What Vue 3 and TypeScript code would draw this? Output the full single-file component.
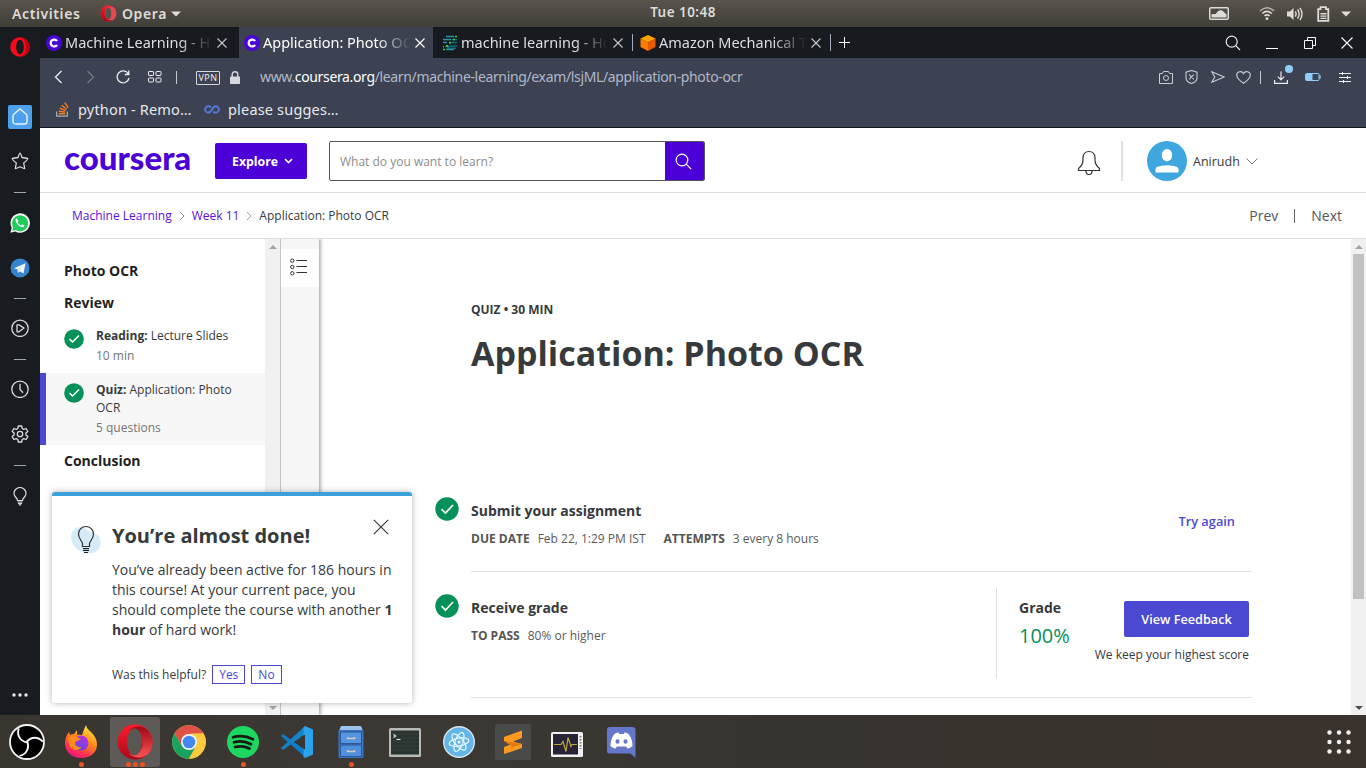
<script setup lang="ts">
interface Tab { title: string; icon: 'coursera' | 'hacker' | 'aws'; active?: boolean }
const tabs: Tab[] = [
  { title: 'Machine Learning - Home', icon: 'coursera' },
  { title: 'Application: Photo OCR', icon: 'coursera', active: true },
  { title: 'machine learning - How to', icon: 'hacker' },
  { title: 'Amazon Mechanical Turk', icon: 'aws' },
]

interface Item { kind: string; name: string; info: string; current?: boolean }
const items: Item[] = [
  { kind: 'Reading:', name: 'Lecture Slides', info: '10 min' },
  { kind: 'Quiz:', name: 'Application: Photo OCR', info: '5 questions', current: true },
]
</script>

<template>
  <div class="desktop">
    <header class="topbar">
      <span class="activities">Activities</span>
      <svg class="tb-opera" width="17" height="17" viewBox="0 0 17 17"><defs><linearGradient id="opg" x1="0" y1="0" x2="0" y2="1"><stop offset="0" stop-color="#ff1b2d" /><stop offset="1" stop-color="#a70014" /></linearGradient></defs><ellipse cx="8.500" cy="8.500" rx="8" ry="8" fill="#e8474f" /><path d="M8.500.500a8 8 0 0 0 0 16c2 0 3-.8 4-1.800-5 2-7.800-1.700-7.800-6.200s2.800-8.200 7.800-6.200C11.500 1.300 10.500.500 8.500.500z" fill="url(#opg)" /><ellipse cx="8.300" cy="8.500" rx="3" ry="6" fill="#55504a" /></svg>
      <span class="tb-app">Opera</span>
      <svg class="tb-caret" width="10" height="6" viewBox="0 0 10 6"><path d="M0 .5h10L5 5.500z" fill="#dedcd8" /></svg>
      <span class="clock">Tue 10:48</span>
      <div class="tray">
        <div class="c28 traygap"><svg width="20" height="13" viewBox="0 0 20 13"><rect x=".75" y=".75" width="18.500" height="11.500" rx="1" fill="none" stroke="#dedcd8" stroke-width="1.500" /><path d="M2.500 10.500V7.500c2.500-1 3.500.5 5-1.500s3-3.500 5.500-2.500 2.500 3 4.500 3.500v3.500z" fill="#dedcd8" /></svg></div>
        <div class="c28"><svg width="16" height="15" viewBox="0 0 16 15" fill="none" stroke="#dedcd8" stroke-width="1.600"><path d="M1 5Q8-1.500 15 5" stroke="#b5b2ac" /><path d="M3.300 7.500q4.700-4.300 9.400 0M5.500 9.900q2.500-2.200 5 0" /><circle cx="8" cy="12.700" r="1.400" fill="#dedcd8" stroke="none" /></svg></div>
        <div class="c27"><svg width="16" height="14" viewBox="0 0 16 14"><path d="M0 4.500h3L6.500 1v12L3 9.500H0z" fill="#dedcd8" /><path d="M8.200 4.500q1.800 2.500 0 5M10.500 2.500q3.400 4.500 0 9M12.900.8q4.200 6.200 0 12.400" fill="none" stroke="#dedcd8" stroke-width="1.400" /></svg></div>
        <div class="c30"><svg width="13" height="16" viewBox="0 0 13 16"><path d="M1.200 3.200h2.300v-2h5.500v2h2.300v11.600H1.200z" fill="none" stroke="#dedcd8" stroke-width="1.800" /><path d="M3.500 7.800h6M3.500 10.100h6M3.500 12.400h6" stroke="#dedcd8" stroke-width="1.400" /></svg></div>
        <div class="c16"><svg width="10" height="6" viewBox="0 0 10 6"><path d="M0 .5h10L5 5.500z" fill="#dedcd8" /></svg></div>
      </div>
    </header>

    <div class="window">
      <nav class="rail">
        <div class="s40 first"><svg width="20" height="20" viewBox="0 0 20 20"><path fill-rule="evenodd" fill="#f80b16" d="M10 .2a9.800 9.800 0 1 0 0 19.600 9.800 9.800 0 0 0 0-19.600zm0 2.600c2.300 0 3.800 3.200 3.800 7.200s-1.500 7.200-3.800 7.200-3.800-3.200-3.800-7.200S7.700 2.800 10 2.800z" /><path d="M10 .2c2 0 9.800 2 9.800 9.800S12 19.800 10 19.800c4-1 6-5 6-9.800S14 1.200 10 .2z" fill="#c00010" /></svg></div>
        <div class="s44"><span class="home"><svg width="16" height="18" viewBox="0 0 16 18"><path d="M1 8Q1 7 1.800 6.200L8 1l6.200 5.200Q15 7 15 8v5.500q0 2.500-2.500 2.500h-9Q1 16 1 13.500z" fill="none" stroke="#e8f2fc" stroke-width="1.400" /></svg></span></div>
        <div class="s44"><svg width="18" height="18" viewBox="0 0 18 18"><path d="M9 1.200q.6 0 2 4.300l5.700 1q.6.800-4 4.500l1 5.500Q13 17 9 14.800 5 17 4.300 16.500l1-5.500Q.7 7.300 1.300 6.500l5.700-1Q8.400 1.200 9 1.200z" fill="none" stroke="#d8dadd" stroke-width="1.300" stroke-linejoin="round" /></svg></div>
        <div class="s18"><i></i></div>
        <div class="s44"><svg width="20" height="20" viewBox="0 0 20 20"><path d="M.3 19.700l1.400-5A9.700 9.700 0 1 1 5.300 18.400z" fill="#f4f6f5" /><path d="M2.200 17.800l1-3.400A8 8 0 1 1 5.700 17z" fill="#1fcb5b" /><path d="M6.800 5.200c-1.300.5-1.600 2.100-.8 3.800 1.400 2.900 3.600 4.800 6 5.200 1.200.2 2.300-.6 2.400-1.600l-2.200-1.300-1.200 1.100c-1.500-.5-2.800-1.800-3.400-3.200l.9-1z" fill="#fff" /></svg></div>
        <div class="s46"><svg width="20" height="20" viewBox="0 0 20 20"><circle cx="10" cy="10" r="9.500" fill="#3584cd" /><path d="M4 10.300l11.500-5-2 10.200-3.700-2.300-1.800 1.800-.5-3.500z" fill="#f4f7fa" /><path d="M7.500 11.500L13 7.500l-4.500 5z" fill="#b9cfe3" /></svg></div>
        <div class="s14"><i></i></div>
        <div class="s46"><svg width="19" height="18" viewBox="0 0 19 18" fill="none" stroke="#d8dadd" stroke-width="1.300"><circle cx="9" cy="9.300" r="8.200" /><path d="M6 5.800h2l5 3.300-5 3.700H6z" stroke-linejoin="round" /></svg></div>
        <div class="s16"><i></i></div>
        <div class="s44"><svg width="19" height="18" viewBox="0 0 19 18" fill="none" stroke="#d8dadd" stroke-width="1.300"><circle cx="9" cy="9.300" r="8.200" /><path d="M9 3.800v5.700l3 3.300" /></svg></div>
        <div class="s46"><svg width="19" height="18" viewBox="0 0 19 18" fill="none" stroke="#d8dadd" stroke-width="1.300" stroke-linejoin="round"><path d="M7.300 1h3.400l.5 2.500 1.500.9 2.400-.9 1.700 3-1.900 1.600v1.800l1.900 1.600-1.700 3-2.400-.9-1.500.9-.5 2.500H7.300l-.5-2.500-1.500-.9-2.400.9-1.700-3 1.900-1.600V8.100L1.200 6.500l1.700-3 2.400.9 1.500-.9z" /><circle cx="9" cy="9" r="2.700" /></svg></div>
        <div class="s16"><i></i></div>
        <div class="s46"><svg width="14" height="19" viewBox="0 0 14 19"><path d="M4.500 13.500C4.500 11 1 9.800 1 6.500a6 6 0 0 1 12 0c0 3.300-3.500 4.500-3.500 7z" fill="none" stroke="#d8dadd" stroke-width="1.200" /><path d="M4.500 15h5M5 16.600h4M6 18h2" stroke="#d8dadd" stroke-width="1.200" /></svg></div>
        <div class="s40 last"><svg width="16" height="4" viewBox="0 0 16 4" fill="#e4e6e8"><circle cx="2" cy="2" r="1.700" /><circle cx="8" cy="2" r="1.700" /><circle cx="14" cy="2" r="1.700" /></svg></div>
      </nav>

      <section class="browser">
        <div class="tabs">
          <div v-for="(t, i) in tabs" :key="i" class="tab" :class="{ active: t.active, ruled: i > 1 }">
            <svg v-if="t.icon === 'coursera'" width="16" height="16" viewBox="0 0 16 16"><circle cx="8" cy="8" r="8" fill="#4a06d6" /><path d="M11 6.200a3.400 3.400 0 1 0 0 3.600" fill="none" stroke="#fff" stroke-width="2.300" /></svg>
            <svg v-else-if="t.icon === 'hacker'" width="16" height="16" viewBox="0 0 16 16" stroke-width="1.600"><path d="M4 1.500h8M1 4.500h8M1 7.500h4M4 14.500h8M3.500 11.500h4" stroke="#2c93a6" /><path d="M7 7.500h8M8 11h7M5 13.200h9M10 4.500h5" stroke="#0d6f88" /><path d="M13 1.500h2M11 4.500h2M7 7.700h2M4 10.700h2M1 14.500h2M1 11.700h1" stroke="#3fd42c" /></svg>
            <svg v-else width="16" height="16" viewBox="0 0 16 16"><path d="M8 0l7.500 3.500L8 7.500.5 3.500z" fill="#ffa300" /><path d="M.5 3.500L8 7.500V16L.5 12z" fill="#ff7a00" /><path d="M15.500 3.500L8 7.500V16l7.500-4z" fill="#e85a00" /></svg>
            <span class="tab-title">{{ t.title }}</span>
            <svg class="x" width="10" height="10" viewBox="0 0 10 10"><path d="M.5.5l9 9M9.500.5l-9 9" stroke="currentColor" stroke-width="1.100" /></svg>
          </div>
          <svg class="plus" width="11" height="11" viewBox="0 0 11 11"><path d="M5.500 0v11M0 5.500h11" stroke="#fff" /></svg>
          <div class="winctl">
            <div class="c38"><svg width="16" height="16" viewBox="0 0 16 16" fill="none" stroke="#e8eaec" stroke-width="1.200"><circle cx="6.700" cy="6.700" r="5.500" /><path d="M10.700 10.700l4.300 4.300" /></svg></div>
            <div class="c39"><svg width="12" height="12" viewBox="0 0 12 12"><path d="M0 11.500h12" stroke="#fff" /></svg></div>
            <div class="c38"><svg width="12" height="12" viewBox="0 0 12 12" fill="none" stroke="#fff"><path d="M.5 3.500h8v8h-8zM3.500 3.500v-3h8v8h-3" /></svg></div>
            <div class="c37"><svg width="12" height="12" viewBox="0 0 12 12"><path d="M.5.500l11 11M11.500.500l-11 11" stroke="#fff" stroke-width="1.100" /></svg></div>
          </div>
        </div>

        <div class="toolbar">
          <div class="c32"><svg width="9" height="14" viewBox="0 0 9 14"><path d="M7.500 1L1.500 7l6 6" fill="none" stroke="#eceef1" stroke-width="1.300" /></svg></div>
          <div class="c32"><svg width="9" height="14" viewBox="0 0 9 14"><path d="M1.500 1l6 6-6 6" fill="none" stroke="#737986" stroke-width="1.300" /></svg></div>
          <div class="c34"><svg width="14" height="14" viewBox="0 0 14 14"><path d="M12.300 3.800A6 6 0 1 0 13 8M12.800.5v4h-4" fill="none" stroke="#eceef1" stroke-width="1.300" /></svg></div>
          <div class="c29"><svg width="14" height="12" viewBox="0 0 14 12" fill="none" stroke="#eceef1"><rect x=".5" y=".5" width="5" height="4" rx=".6" /><rect x="8" y=".5" width="5" height="4" rx=".6" /><rect x=".5" y="7" width="5" height="4" rx=".6" /><rect x="8" y="7" width="5" height="4" rx=".6" /></svg></div>
          <div class="c15"><b class="vsep"></b></div>
          <span class="vpn">VPN</span>
          <svg class="lock" width="10" height="14" viewBox="0 0 10 14"><path d="M2.200 6V3.500a2.800 2.800 0 0 1 5.600 0V6" fill="none" stroke="#d6d8dc" stroke-width="1.400" /><rect y="5.500" width="10" height="7.500" rx=".7" fill="#d6d8dc" /></svg>
          <span class="url">www.<em>coursera.org</em>/learn/machine-learning/exam/lsjML/application-photo-ocr</span>
          <div class="actions">
            <div class="c26"><svg width="14" height="13" viewBox="0 0 14 13" fill="none" stroke="#c9ccd3"><path d="M.5 2.500h3l1-2h5l1 2h3v10H.5z" /><circle cx="7" cy="7" r="2.500" /></svg></div>
            <div class="c26"><svg width="14" height="14" viewBox="0 0 14 14" fill="none" stroke="#c9ccd3"><path d="M6.500.5l5.500 1.600v6Q12 12 6.500 13.500 1 12 1 8.100v-6zM4.200 4.700l4.600 4.600M8.800 4.700L4.200 9.300" stroke-width="1.100" /></svg></div>
            <div class="c26"><svg width="14" height="12" viewBox="0 0 14 12" fill="none" stroke="#c9ccd3"><path d="M.8.800L13.200 6 .8 11.200 3.800 6z" stroke-width="1.100" /></svg></div>
            <div class="c26"><svg width="16" height="13" viewBox="0 0 16 13" fill="none" stroke="#c9ccd3"><path d="M7.500 12.300Q.7 7.500.7 4.200C.7.500 5.800-.7 7.500 2.600 9.200-.7 14.300.5 14.300 4.200q0 3.300-6.800 8.100z" stroke-width="1.100" /></svg></div>
            <div class="c7"><b class="vsep"></b></div>
            <div class="c34 dl"><svg width="14" height="13" viewBox="0 0 14 13" fill="none" stroke="#e8eaee" stroke-width="1.200"><path d="M.6 9v3.400h12.800V9M7 .5v8.300M3.800 5.600L7 8.800l3.200-3.200" /></svg><u></u></div>
            <div class="c30"><svg width="16" height="8" viewBox="0 0 16 8"><rect x=".5" y=".5" width="13.500" height="7" rx="1" fill="none" stroke="#8fcdfb" /><rect x="1" y="1" width="6.500" height="6" fill="#8fcdfb" /><path d="M15 2.500v3" stroke="#8fcdfb" stroke-width="1.500" /></svg></div>
            <div class="c34"><svg width="12" height="11" viewBox="0 0 12 11" stroke="#eceef1"><path d="M0 1.500h12M0 5.500h12M0 9.500h12M3.500 0v3M8.500 4v3M4.500 8v3" /></svg></div>
          </div>
        </div>

        <div class="bookmarks">
          <svg width="13" height="15" viewBox="0 0 13 15" fill="none"><path d="M.7 9.500v4.700h10.600V9.500" stroke="#a9adb4" stroke-width="1.200" /><path d="M2.800 11.800h6.400M2.900 9.200l6.300.9M3.800 6.200l5.900 2.500M5.800 3.300l4.900 4M8.700.7l3.500 5" stroke="#f48024" stroke-width="1.400" /></svg>
          <span class="bm1">python - Remo…</span>
          <svg class="inf" width="16" height="9" viewBox="0 0 16 9"><path d="M7 2Q5.500 1.200 4.300 1.200a3.200 3.200 0 0 0 0 6.400C8 7.600 8 1.200 11.700 1.200a3.200 3.200 0 0 1 0 6.400Q10.500 7.600 9 6.800" fill="none" stroke="#5579d8" stroke-width="2" /></svg>
          <span class="bm2">please sugges…</span>
        </div>

        <main class="page">
          <div class="site-head">
            <span class="logo">coursera</span>
            <button class="explore">Explore<svg width="9" height="6" viewBox="0 0 9 6"><path d="M1 1l3.500 3.500L8 1" fill="none" stroke="#fff" stroke-width="1.600" /></svg></button>
            <div class="search"><span>What do you want to learn?</span><div class="go"><svg width="17" height="17" viewBox="0 0 17 17" fill="none" stroke="#fff" stroke-width="1.200"><circle cx="7" cy="7" r="5.800" /><path d="M11.200 11.200l5 5" /></svg></div></div>
            <svg class="bell" width="24" height="26" viewBox="0 0 24 26" fill="none" stroke="#333"><path d="M1.500 20.500v-2Q6 15 6 10V7.500Q6.500 1.500 12 1.500t6 6V10q0 5 4.500 8.500v2z" stroke-width="1.200" /><path d="M8.800 20.800q.2 3.700 3.200 3.700t3.200-3.700" stroke-width="1.200" /></svg>
            <b class="head-rule"></b>
            <svg class="avatar" width="40" height="40" viewBox="0 0 40 40"><circle cx="20" cy="20" r="20" fill="#3fa7df" /><ellipse cx="20" cy="14.200" rx="5.200" ry="6.200" fill="#fff" /><path d="M8.500 31.500v-3.200q0-1.800 2-2.500 4-1.600 9.500-1.600t9.500 1.600q2 .7 2 2.500v3.200z" fill="#fff" /></svg>
            <span class="user">Anirudh</span>
            <svg class="down" width="12" height="7" viewBox="0 0 12 7"><path d="M.7.700L6 6 11.300.7" fill="none" stroke="#777" /></svg>
          </div>

          <div class="crumbs">
            <a>Machine Learning</a>
            <svg width="6" height="10" viewBox="0 0 6 10"><path d="M.8.800L5 5 .8 9.200" fill="none" stroke="#999" /></svg>
            <a>Week 11</a>
            <svg width="6" height="10" viewBox="0 0 6 10"><path d="M.8.800L5 5 .8 9.200" fill="none" stroke="#999" /></svg>
            <span>Application: Photo OCR</span>
            <div class="pager"><span>Prev</span><b></b><span>Next</span></div>
          </div>

          <div class="body">
            <aside class="lessons">
              <h4>Photo OCR</h4>
              <h4>Review</h4>
              <div v-for="it in items" :key="it.kind" class="item" :class="{ current: it.current }">
                <svg width="20" height="20" viewBox="0 0 20 20"><circle cx="10" cy="10" r="9.800" fill="#06905a" /><path d="M5.500 10l3 3L15 6.500" fill="none" stroke="#fff" stroke-width="1.500" /></svg>
                <div><p><strong>{{ it.kind }}</strong> {{ it.name }}</p><small>{{ it.info }}</small></div>
              </div>
              <h4>Conclusion</h4>
            </aside>
            <div class="scroll left"><svg width="8" height="4" viewBox="0 0 8 4"><path d="M0 4l4-4 4 4z" fill="#a3a3a3" /></svg><svg width="8" height="4" viewBox="0 0 8 4"><path d="M0 0h8L4 4z" fill="#a3a3a3" /></svg></div>
            <div class="toggle"><div><svg width="18" height="18" viewBox="0 0 18 18" fill="none" stroke="#333"><circle cx="2.300" cy="2.700" r="1.700" /><circle cx="2.300" cy="9" r="1.700" /><circle cx="2.300" cy="15.300" r="1.700" /><path d="M6.500 2.500H17M6.500 8.500H17M6.500 14.500H17" /></svg></div></div>

            <article class="content">
              <p class="eyebrow">QUIZ • 30 MIN</p>
              <h1>Application: Photo OCR</h1>
              <section class="row submit">
                <svg class="tick" width="24" height="24" viewBox="0 0 24 24"><circle cx="12" cy="12" r="11.700" fill="#06905a" /><path d="M6.500 12.200l4 3.800 7.500-8" fill="none" stroke="#fff" stroke-width="1.700" /></svg>
                <div class="desc"><h3>Submit your assignment</h3><p><strong>DUE DATE</strong>Feb 22, 1:29 PM IST<strong class="next">ATTEMPTS</strong>3 every 8 hours</p></div>
                <a class="again">Try again</a>
              </section>
              <section class="row receive">
                <svg class="tick" width="24" height="24" viewBox="0 0 24 24"><circle cx="12" cy="12" r="11.700" fill="#06905a" /><path d="M6.500 12.200l4 3.800 7.500-8" fill="none" stroke="#fff" stroke-width="1.700" /></svg>
                <div class="desc"><h3>Receive grade</h3><p><strong>TO PASS</strong>80% or higher</p></div>
                <div class="grade">
                  <div><h3>Grade</h3><span class="pct">100%</span></div>
                  <div class="fb"><button>View Feedback</button><span>We keep your highest score</span></div>
                </div>
              </section>
            </article>
            <div class="scroll right"><svg width="8" height="4" viewBox="0 0 8 4"><path d="M0 4l4-4 4 4z" fill="#a3a3a3" /></svg><b></b><svg width="8" height="4" viewBox="0 0 8 4"><path d="M0 0h8L4 4z" fill="#505050" /></svg></div>
          </div>
        </main>
      </section>
    </div>

    <div class="toast">
      <svg class="idea" width="32" height="30" viewBox="0 0 32 30"><path d="M1 12C1 5 6 2 11 2s7 5 12 6 7 3 7.500 9-4 11.500-12 11.500S1 21 1 12z" fill="#d5ebf8" /><path d="M12.500 21.500v-3C12 16 8.500 13.500 8.500 9a7.500 7.500 0 0 1 15 0c0 4.500-3.500 7-4 9.500v3z" fill="none" stroke="#333" stroke-width="1.200" /><path d="M13 23.500h6M13 25.300h6M14 27.500h4" stroke="#222" stroke-width="1.200" /></svg>
      <div class="msg">
        <h2>You’re almost done!</h2>
        <p>You’ve already been active for 186 hours in this course! At your current pace, you should complete the course with another <strong>1 hour</strong> of hard work!</p>
        <div class="helpful">Was this helpful?<span>Yes</span><span>No</span></div>
      </div>
      <svg class="close" width="16" height="16" viewBox="0 0 16 16"><path d="M.8.800l14.400 14.400M15.200.8L.8 15.200" stroke="#333" stroke-width="1.100" /></svg>
    </div>

    <footer class="dock">
      <div class="app"><svg width="36" height="36" viewBox="0 0 36 36"><circle cx="18" cy="18" r="17" fill="#000" stroke="#f4f4f4" stroke-width="1.800" /><g fill="none" stroke="#f4f4f4" stroke-width="1.900"><path d="M9.800 4.500C7.500 11 11 17 18 18.500" /><path d="M9.800 4.500C7.500 11 11 17 18 18.500" transform="rotate(120 18 18)" /><path d="M9.800 4.500C7.500 11 11 17 18 18.500" transform="rotate(240 18 18)" /></g></svg></div>
      <div class="app run"><svg width="34" height="34" viewBox="0 0 34 34"><defs><linearGradient id="ff" x1=".8" y1="0" x2=".3" y2="1"><stop offset="0" stop-color="#fff044" /><stop offset=".45" stop-color="#ff8a16" /><stop offset=".8" stop-color="#ff2f52" /><stop offset="1" stop-color="#e31587" /></linearGradient><linearGradient id="ffp" x1=".6" y1="0" x2=".3" y2="1"><stop offset="0" stop-color="#b833e1" /><stop offset="1" stop-color="#5b4be0" /></linearGradient></defs><path d="M22 0c1 4 3 5 5 7 4 4 6 8 6 12.500C33 28 26 33 17 33S1 27 1 18c0-4 1.500-8 4-11l1 3q2-1 4-1l3-4v4.500l5 .5q2-6 4-10z" fill="url(#ff)" /><circle cx="17" cy="18" r="7.500" fill="url(#ffp)" /><path d="M4 13c4-3 8-2 13 1-2 2-5 1-6 4 0 3 4 5 7 4-5 6-13 2-13-4z" fill="#ff8b1c" /></svg><span class="pips"><i></i></span></div>
      <div class="app run active"><svg width="36" height="36" viewBox="0 0 36 36"><defs><linearGradient id="od" x1="0" y1="0" x2="0" y2="1"><stop offset="0" stop-color="#ff1b2d" /><stop offset="1" stop-color="#a9081b" /></linearGradient><linearGradient id="ol" x1="0" y1="0" x2="0" y2="1"><stop offset="0" stop-color="#9c0717" /><stop offset="1" stop-color="#ff5153" /></linearGradient></defs><circle cx="18" cy="18" r="17.500" fill="url(#od)" /><path d="M12 6.500C19-1 35 2 35.500 18S19 37 12 29.500c6 3 14-2 14-11.500S18 3.500 12 6.500z" fill="url(#ol)" /><ellipse cx="17.500" cy="18" rx="7.500" ry="13.500" fill="#5b5854" /></svg><span class="pips"><i></i><i></i><i></i></span></div>
      <div class="app"><svg width="34" height="34" viewBox="0 0 34 34"><circle cx="17" cy="17" r="16.800" fill="#ffcd40" /><path d="M2.500 8.500A16.800 16.800 0 0 1 31.500 8.500L17 9l-7 12z" fill="#de5145" /><path d="M2.500 8.500A16.800 16.800 0 0 0 17 33.800l6.500-12L10 21z" fill="#1aa260" /><path d="M31.500 8.500H17a8.500 8.500 0 0 1 7.300 12.700L17 33.800A16.800 16.800 0 0 0 31.500 8.500z" fill="#fdc93e" /><circle cx="17" cy="17" r="8" fill="#f4f4f4" /><circle cx="17" cy="17" r="6.300" fill="#4387f3" /></svg></div>
      <div class="app run"><svg width="32" height="32" viewBox="0 0 32 32"><circle cx="16" cy="16" r="16" fill="#1ed760" /><path d="M6 11.300q10-3.300 20 2M7 16.300q9-2.500 17 2M8 21q8-2 14.500 1.500" fill="none" stroke="#171b18" stroke-width="2.700" stroke-linecap="round" /></svg><span class="pips"><i></i></span></div>
      <div class="app"><svg width="32" height="32" viewBox="0 0 32 32"><path d="M0 10l2-2 22 16v7z" fill="#0b7fcb" /><path d="M0 22l2 2L24 8V0z" fill="#1683c9" /><path d="M24 0l8 3.500v25L24 32l-1.500-1.500V1.500z" fill="#2aa2ec" /><path d="M24 8.500v15L13.500 16z" fill="#373733" /></svg></div>
      <div class="app run"><svg width="26" height="34" viewBox="0 0 26 34"><path d="M3 1h20l2 5H1z" fill="#9cc3f0" /><rect x=".5" y="5" width="25" height="28" rx="1" fill="#3a74c4" /><rect x="2.500" y="7" width="21" height="11.500" fill="#5795e0" stroke="#285899" /><rect x="2.500" y="20" width="21" height="11.500" fill="#5190dc" stroke="#285899" /><path d="M9.500 12v1.500h7V12M9.500 25v1.500h7V25" fill="none" stroke="#d3ccbc" stroke-width="1.500" /></svg><span class="pips"><i></i></span></div>
      <div class="app"><svg width="32" height="29" viewBox="0 0 32 29"><rect width="32" height="29" rx="1.500" fill="#b9b9b5" /><rect x="2" y="2.500" width="28" height="24" fill="#29332f" /><path d="M2 6h28M2 10h28M2 14h28M2 18h28M2 22h28" stroke="#36423d" /><path d="M4.500 6.500l2.200 1.500-2.200 1.500M7.500 11.500h4" fill="none" stroke="#e9ece9" stroke-width="1.100" /></svg></div>
      <div class="app"><svg width="32" height="32" viewBox="0 0 32 32"><circle cx="16" cy="16" r="15.300" fill="#62b5e5" stroke="#d8e6ef" stroke-width="1.400" /><g fill="none" stroke="#eef8ff" stroke-width="1.200"><ellipse cx="16" cy="16" rx="4" ry="10" transform="rotate(20 16 16)" /><ellipse cx="16" cy="16" rx="4" ry="10" transform="rotate(80 16 16)" /><ellipse cx="16" cy="16" rx="4" ry="10" transform="rotate(-40 16 16)" /></g><circle cx="16" cy="16" r="1.500" fill="#fff" /></svg></div>
      <div class="app"><svg width="36" height="36" viewBox="0 0 36 36"><rect width="36" height="36" rx="2" fill="#4a4a49" /><path d="M9 13l18-6.500v7.500L18 17.500l9 2.500v4L9 30v-7l9-3.500-9-2.500z" fill="#ff9a1f" /><path d="M9 17l18 3-9 3.300z" fill="#e37a0c" /></svg></div>
      <div class="app"><svg class="mon" width="32" height="25" viewBox="0 0 32 25"><rect width="32" height="25" rx="1.500" fill="#f0f0ee" /><rect x="2" y="2" width="25" height="20.500" fill="#282235" /><path d="M3 12.500h7l2-3 3 10 2-14 3 9 1-2h5" fill="none" stroke="#b9a83b" stroke-width="1.200" /><path d="M29.500 4v13" stroke="#777" stroke-width="1.800" stroke-dasharray="1.500 1.500" /></svg></div>
      <div class="app"><svg width="29" height="31" viewBox="0 0 29 31"><path d="M2.500 0h23q3 0 3 3v28l-5-4.500h-21Q0 26.500 0 24V3Q0 0 2.500 0z" fill="#6577c8" /><path d="M7.500 7q2.500-1.400 4-1.400l.7 1.300h4.600l.7-1.300q1.500 0 4 1.400 4 5 4 12-3 2.500-5 2.500l-1.500-2h-9l-1.500 2q-2 0-5-2.500 0-7 4-12z" fill="#fff" /><ellipse cx="10.500" cy="14.500" rx="2" ry="2.200" fill="#6577c8" /><ellipse cx="18.500" cy="14.500" rx="2" ry="2.200" fill="#6577c8" /></svg></div>
      <svg class="grid" width="24" height="24" viewBox="0 0 24 24" fill="#f2f2f2"><template v-for="r in 3" :key="r"><circle v-for="c in 3" :key="c" :cx="c * 9.500 - 7" :cy="r * 9.500 - 7" r="2.200" /></template></svg>
    </footer>
  </div>
</template>

<style>
html, body { margin: 0; overflow: hidden; }
</style>

<style scoped>
* { box-sizing: border-box; }
svg { display: block; flex: none; }
h1, h2, h3, h4, p { margin: 0; }
.desktop { position: relative; width: 1366px; height: 768px; overflow: hidden; display: flex; flex-direction: column; font-family: "Open Sans", sans-serif; color: #373a3c; }
.c7, .c15, .c16, .c26, .c27, .c28, .c29, .c30, .c32, .c34, .c37, .c38, .c39 { display: flex; align-items: center; justify-content: center; flex: none; }
.c7 { width: 7px; } .c15 { width: 15px; } .c16 { width: 16px; } .c26 { width: 26px; } .c27 { width: 27px; } .c28 { width: 28px; }
.c29 { width: 29px; } .c30 { width: 30px; } .c32 { width: 32px; } .c34 { width: 34px; } .c37 { width: 37px; } .c38 { width: 38px; } .c39 { width: 39px; }

.topbar { height: 27px; flex: none; display: flex; align-items: center; padding-left: 12px; position: relative; background: linear-gradient(#59544c, #403e38); color: #dedcd8; font: 600 14px "Noto Sans", sans-serif; }
.activities { width: 88px; letter-spacing: .6px; }
.tb-app { margin-left: 5px; width: 49px; letter-spacing: .6px; }
.clock { position: absolute; left: 0; right: 0; top: 3px; text-align: center; font-size: 13.500px; letter-spacing: .45px; }
.tray { margin-left: auto; display: flex; height: 27px; padding-right: 12px; }
.traygap { margin-right: 20px; }

.window { display: flex; height: 688px; }
.rail { width: 40px; flex: none; background: #181c20; display: flex; flex-direction: column; }
.rail > div { display: flex; align-items: center; justify-content: center; flex: none; }
.s14 { height: 14px; } .s16 { height: 16px; } .s18 { height: 18px; } .s40 { height: 40px; } .s44 { height: 44px; } .s46 { height: 46px; }
.rail .first { margin-bottom: 28px; }
.rail .last { margin-top: auto; }
.rail i { width: 12px; height: 1px; background: #a0a4ab; }
.home { width: 24px; height: 24px; border-radius: 2px; background: #4da0ec; display: flex; align-items: center; justify-content: center; }

.browser { width: 1326px; display: flex; flex-direction: column; font-family: "Noto Sans", sans-serif; }
.tabs { height: 31px; flex: none; background: #171a1e; display: flex; align-items: center; }
.tab { width: 198px; height: 31px; padding-left: 6px; display: flex; align-items: center; color: #dcdee1; flex: none; position: relative; }
.tab.active { margin: 0 3px 0 1px; width: 194px; padding-left: 5px; background: #3c4251; color: #fff; }
.tab-title { margin-left: 3px; padding-bottom: 2px; width: 147px; overflow: hidden; white-space: nowrap; font-size: 14.500px; mask-image: linear-gradient(90deg, #000 114px, transparent 147px); }
.x { margin-left: 5px; color: #c4c7cc; }
.active .x { color: #fff; }
.tab.ruled::after { content: ""; position: absolute; right: 1px; top: 7px; width: 1px; height: 17px; background: #a2aabb; }
.plus { margin-left: 7px; }
.winctl { margin-left: auto; display: flex; padding-right: 1px; }
.winctl .c37 { width: 36px; }
.toolbar { height: 38px; flex: none; background: #3c4251; display: flex; align-items: center; padding-left: 2px; }
.vsep { width: 1px; height: 13px; background: #c4c8cf; }
.vpn { margin: 2px 0 0 12px; width: 24px; height: 14px; border: 1px solid #d6d8dc; border-radius: 1px; color: #e8eaee; font-size: 9px; line-height: 12px; text-align: center; letter-spacing: .5px; }
.lock { margin: 1px 0 0 10px; }
.url { margin-left: 20px; padding-bottom: 2px; font-size: 14px; letter-spacing: -.35px; color: #b0b8c8; white-space: nowrap; }
.url em { font-style: normal; color: #fff; }
.actions { margin-left: auto; display: flex; padding-right: 4px; height: 38px; }
.dl { position: relative; }
.dl u { position: absolute; right: 5px; top: 7px; width: 8px; height: 8px; border-radius: 4px; background: #8fcdfb; }
.bookmarks { height: 32px; flex: none; background: #3c4251; border-bottom: 1px solid #14161a; display: flex; align-items: center; padding: 0 0 4px 16px; color: #e6e8ec; font-size: 14.500px; letter-spacing: .18px; white-space: nowrap; }
.bookmarks span { margin-top: -1px; }
.bm1 { margin-left: 9px; width: 126px; }
.inf { margin-right: 8px; }

.page { flex: 1; background: #fff; font-family: "Open Sans", sans-serif; display: flex; flex-direction: column; min-height: 0; }
.site-head { height: 65px; flex: none; border-bottom: 1px solid #e0e0e0; display: flex; align-items: center; padding-left: 24px; }
.logo { width: 151px; font: 900 33px/36px Lato, sans-serif; letter-spacing: 0; color: #4a00d6; margin-top: -7px; }
.explore { width: 92px; height: 36px; margin-top: 2px; border: 0; border-radius: 2px; background: #4a00d6; color: #fff; font: 700 12.300px "Open Sans", sans-serif; padding: 0 0 0 3px; display: flex; align-items: center; justify-content: center; gap: 6px; }
.search { margin-left: 22px; margin-top: 2px; width: 376px; height: 40px; border: 1px solid #555; border-radius: 2px; display: flex; align-items: center; justify-content: space-between; padding-left: 10px; color: #8c8c8c; font-size: 12px; overflow: hidden; }
.go { width: 39px; height: 38px; background: #4a00d6; display: flex; align-items: center; justify-content: center; padding-right: 3px; }
.bell { margin-left: auto; margin-top: 5px; }
.head-rule { width: 2px; height: 40px; background: #e0e0e0; margin: 1px 0 0 20px; }
.avatar { margin-left: 24px; margin-top: 2px; }
.user { margin: 2px 0 0 6px; width: 53px; font-size: 12.500px; }
.down { margin-right: 108px; margin-top: 2px; }
.crumbs { height: 46px; flex: none; border-bottom: 1px solid #dcdcdc; display: flex; align-items: center; padding: 0 24px 0 32px; font-size: 12px; white-space: nowrap; }
.crumbs a { color: #5b10dc; }
.crumbs > svg { margin: 0 7px; }
.pager { margin-left: auto; display: flex; align-items: center; font-size: 14px; color: #555; }
.pager b { width: 1px; height: 14px; background: #666; margin: 0 16px 0 16px; }
.body { flex: 1; display: flex; min-height: 0; }
.lessons { width: 225px; padding-top: 16px; flex: none; }
.lessons h4 { height: 32px; line-height: 32px; padding-left: 24px; font-size: 14px; font-weight: 700; color: #1f1f1f; }
.item { display: flex; padding: 8px 24px 8px; line-height: 18px; font-size: 12px; }
.item svg { margin: 2px 12px 0 0; }
.item small { display: block; margin-top: 2px; font-size: 12px; color: #757575; }
.item.current { background: #f7f7f7; border-left: 6px solid #4b49d2; padding-left: 18px; }
.scroll { width: 15px; flex: none; background: #f1f1f1; display: flex; flex-direction: column; align-items: center; justify-content: space-between; padding: 6px 0 5px; }
.scroll.right b { width: 11px; height: 345px; background: #c1c1c1; margin: 5px 0 auto; }
.toggle { width: 39px; flex: none; border-left: 1px solid #c4c4c4; background: #f6f6f6; padding-top: 10px; box-shadow: 2px 0 3px rgba(0, 0, 0, .3); clip-path: inset(0 -6px 0 0); }
.toggle div { height: 38px; background: #fff; display: flex; align-items: center; padding: 0 0 2px 9px; }
.content { flex: 1; padding: 62px 99px 0 116px; overflow: hidden; }
.eyebrow { margin-left: 36px; font-size: 12px; line-height: 18px; font-weight: 700; }
h1 { margin-left: 36px; font-size: 34px; line-height: 44px; margin-top: 12px; font-weight: 700; white-space: nowrap; }
h3 { font-size: 14px; line-height: 20px; font-weight: 700; }
.row { display: flex; position: relative; }
.row::after { content: ""; position: absolute; left: 36px; right: 0; bottom: 0; height: 1px; background: #e1e1e1; }
.tick { margin-right: 12px; }
.submit { margin-top: 122px; height: 75px; }
.submit .desc, .receive .desc { padding-top: 4px; }
.desc p { font-size: 12px; line-height: 18px; margin-top: 9px; color: #5a5a5a; white-space: nowrap; }
.desc strong { margin-right: 8px; color: #555; }
.desc .next { margin-left: 18px; }
.again { margin: 15px 17px 0 auto; font-size: 12.800px; line-height: 18px; font-weight: 600; color: #4b49d2; }
.receive { height: 104px; margin-top: 22px; }
.grade { margin: -6px 3px 18px auto; width: 253px; height: 91px; border-left: 1px solid #dedede; padding-left: 22px; display: flex; justify-content: space-between; }
.grade h3 { margin-top: 10px; }
.pct { display: block; font-size: 20px; line-height: 28px; margin-top: 4px; color: #06905a; }
.fb { display: flex; flex-direction: column; align-items: flex-end; padding-top: 13px; font-size: 12px; white-space: nowrap; }
.fb button { width: 125px; height: 36px; border: 0; border-radius: 2px; background: #4b49d2; color: #fff; font: 600 12.700px "Open Sans", sans-serif; margin-bottom: 9px; padding: 0; }

.toast { position: absolute; left: 52px; top: 492px; width: 360px; height: 211px; background: #fff; border-top: 4px solid #3ba1da; border-radius: 3px; box-shadow: 0 0 6px rgba(0, 0, 0, .3); }
.idea { position: absolute; left: 18px; top: 29px; }
.close { position: absolute; right: 23px; top: 23px; }
.msg { padding: 26px 0 0 60px; width: 345px; }
.msg h2 { font-size: 20px; line-height: 28px; font-weight: 700; white-space: nowrap; }
.msg p { font-size: 14px; line-height: 20px; margin-top: 10px; width: 290px; }
.helpful { display: flex; align-items: center; margin-top: 25px; font-size: 12px; gap: 6px; }
.helpful span { height: 19px; line-height: 17px; border: 1px solid #4b49d2; color: #4b49d2; padding: 0 6px; }

.dock { height: 53px; flex: none; display: flex; background: linear-gradient(90deg, #38352f 0%, #3c3834 30%, #37332e 60%, #3b332d 100%); }
.app { width: 54px; height: 53px; display: flex; align-items: center; justify-content: center; position: relative; padding-top: 1px; flex: none; }
.app.active::before { content: ""; position: absolute; left: 2px; top: 2px; width: 50px; height: 50px; border-radius: 3px; background: #5d5a57; }
.app svg { position: relative; }
.mon { margin-top: 5px; }
.pips { position: absolute; left: 0; right: 0; bottom: 1px; display: flex; justify-content: center; gap: 2px; }
.pips i { width: 5px; height: 5px; border-radius: 3px; background: #e95420; }
.grid { margin: 15px 15px 0 auto; }
</style>
